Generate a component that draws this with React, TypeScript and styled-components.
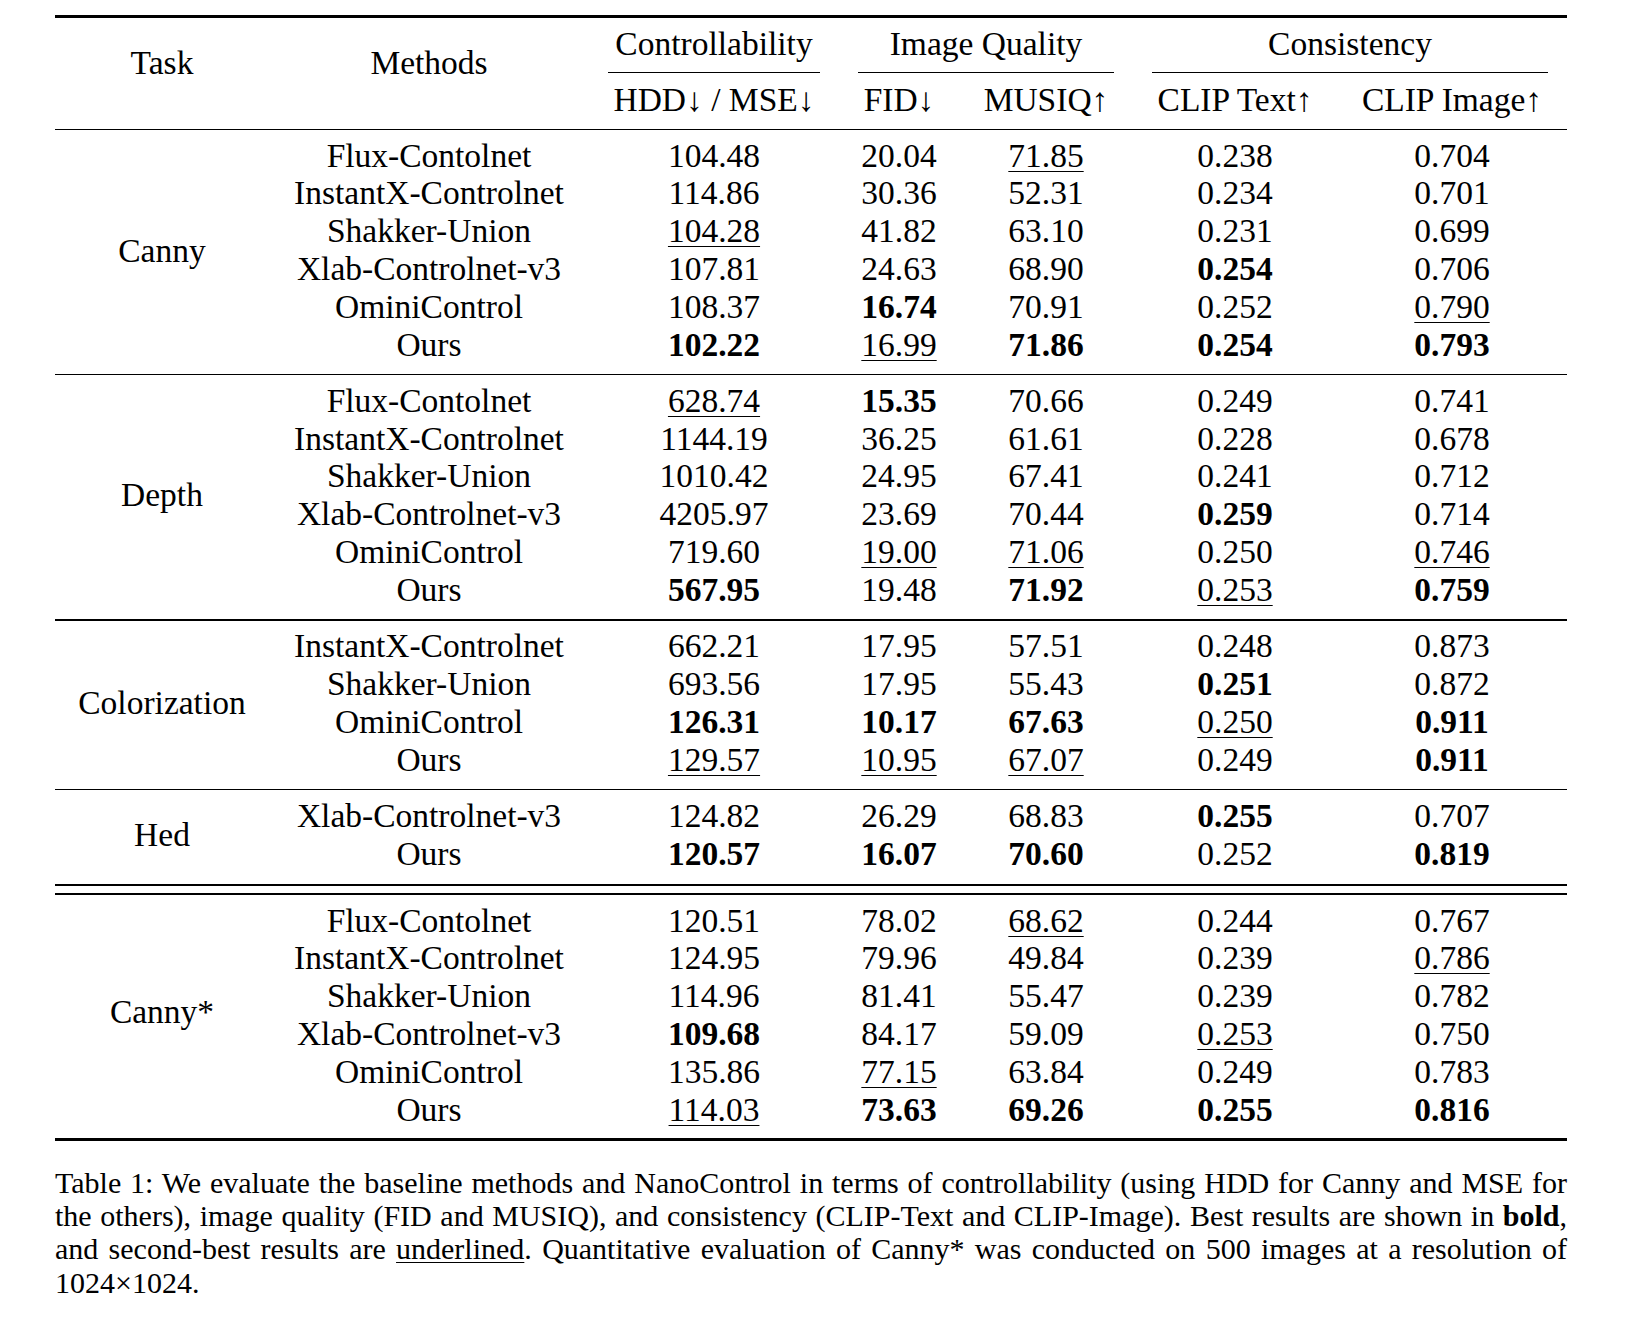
import React from "react";
import styled, { createGlobalStyle } from "styled-components";

const GlobalStyle = createGlobalStyle`
  html, body { margin: 0; padding: 0; background: #ffffff; }
  body {
    font-family: "Liberation Serif", "Times New Roman", serif;
    color: #000;
  }
`;

const COLS = "214px 320px 250px 120px 174px 204px 230px";

const Page = styled.div`
  width: 1512px;
  padding: 15px 0 40px 55px;
`;

const Table = styled.div`
  font-size: 33.5px;
  line-height: 37.8px;
`;

const Rule = styled.div<{ $weight: number }>`
  height: ${(p) => p.$weight}px;
  background: #000;
`;

const DoubleRule = styled.div`
  display: flex;
  flex-direction: column;
  gap: 7px;
`;

const HeaderGrid = styled.div`
  display: grid;
  grid-template-columns: ${COLS};
  grid-template-rows: 37.8px 17.2px 37.8px;
  padding: 8.3px 0 10px;
`;

const StubHead = styled.div<{ $col: number }>`
  grid-column: ${(p) => p.$col};
  grid-row: 1 / 4;
  text-align: center;
  padding-top: 18px;
`;

const GroupHead = styled.div<{ $cols: string }>`
  grid-column: ${(p) => p.$cols};
  grid-row: 1;
  align-self: start;
  line-height: 35.8px;
  text-align: center;
  white-space: nowrap;
`;

const CmidRule = styled.div<{ $cols: string }>`
  grid-column: ${(p) => p.$cols};
  grid-row: 2;
  align-self: start;
  margin: 8.6px 19px 0;
  height: 1.1px;
  background: #000;
`;

const SubHead = styled.div<{ $col: number }>`
  grid-column: ${(p) => p.$col};
  grid-row: 3;
  text-align: center;
  white-space: nowrap;
`;

const Group = styled.div<{ $pt: number; $pb: number }>`
  display: grid;
  grid-template-columns: ${COLS};
  grid-auto-rows: 37.8px;
  align-items: start;
  padding: ${(p) => p.$pt}px 0 ${(p) => p.$pb}px;
`;

const TaskCell = styled.div<{ $rows: number; $lift: number }>`
  grid-column: 1;
  grid-row: 1 / span ${(p) => p.$rows};
  align-self: stretch;
  display: flex;
  align-items: center;
  justify-content: center;
  padding-bottom: ${(p) => p.$lift}px;
`;

const Cell = styled.div`
  line-height: 34px;
  text-align: center;
  white-space: nowrap;
`;

const Value = styled.span<{ $bold?: boolean; $under?: boolean }>`
  font-weight: ${(p) => (p.$bold ? 700 : 400)};
  text-decoration: ${(p) => (p.$under ? "underline" : "none")};
  text-underline-offset: 4px;
  text-decoration-thickness: 1.4px;
`;

const Caption = styled.div`
  margin-top: 25px;
  font-size: 30px;
  line-height: 33.3px;
`;

const CaptionLine = styled.div<{ $last?: boolean }>`
  text-align: justify;
  text-align-last: ${(p) => (p.$last ? "left" : "justify")};
`;

const Under = styled.span`
  text-decoration: underline;
  text-underline-offset: 3px;
  text-decoration-thickness: 1.3px;
`;

type Row = [string, string, string, string, string, string];
type TaskGroup = { task: string; rows: Row[]; pt: number; pb: number; lift: number };

const groups: TaskGroup[] = [
  {
    task: "Canny",
    pt: 8.5,
    pb: 8.5,
    lift: 3,
    rows: [
      ["Flux-Contolnet", "104.48", "20.04", "u71.85", "0.238", "0.704"],
      ["InstantX-Controlnet", "114.86", "30.36", "52.31", "0.234", "0.701"],
      ["Shakker-Union", "u104.28", "41.82", "63.10", "0.231", "0.699"],
      ["Xlab-Controlnet-v3", "107.81", "24.63", "68.90", "b0.254", "0.706"],
      ["OminiControl", "108.37", "b16.74", "70.91", "0.252", "u0.790"],
      ["Ours", "b102.22", "u16.99", "b71.86", "b0.254", "b0.793"],
    ],
  },
  {
    task: "Depth",
    pt: 8.5,
    pb: 8.5,
    lift: 4,
    rows: [
      ["Flux-Contolnet", "u628.74", "b15.35", "70.66", "0.249", "0.741"],
      ["InstantX-Controlnet", "1144.19", "36.25", "61.61", "0.228", "0.678"],
      ["Shakker-Union", "1010.42", "24.95", "67.41", "0.241", "0.712"],
      ["Xlab-Controlnet-v3", "4205.97", "23.69", "70.44", "b0.259", "0.714"],
      ["OminiControl", "719.60", "u19.00", "u71.06", "0.250", "u0.746"],
      ["Ours", "b567.95", "19.48", "b71.92", "u0.253", "b0.759"],
    ],
  },
  {
    task: "Colorization",
    pt: 8.5,
    pb: 8.5,
    lift: 4,
    rows: [
      ["InstantX-Controlnet", "662.21", "17.95", "57.51", "0.248", "0.873"],
      ["Shakker-Union", "693.56", "17.95", "55.43", "b0.251", "0.872"],
      ["OminiControl", "b126.31", "b10.17", "b67.63", "u0.250", "b0.911"],
      ["Ours", "u129.57", "u10.95", "u67.07", "0.249", "b0.911"],
    ],
  },
  {
    task: "Hed",
    pt: 9,
    pb: 9.5,
    lift: 4,
    rows: [
      ["Xlab-Controlnet-v3", "124.82", "26.29", "68.83", "b0.255", "0.707"],
      ["Ours", "b120.57", "b16.07", "b70.60", "0.252", "b0.819"],
    ],
  },
  {
    task: "Canny*",
    pt: 9,
    pb: 8,
    lift: 10,
    rows: [
      ["Flux-Contolnet", "120.51", "78.02", "u68.62", "0.244", "0.767"],
      ["InstantX-Controlnet", "124.95", "79.96", "49.84", "0.239", "u0.786"],
      ["Shakker-Union", "114.96", "81.41", "55.47", "0.239", "0.782"],
      ["Xlab-Controlnet-v3", "b109.68", "84.17", "59.09", "u0.253", "0.750"],
      ["OminiControl", "135.86", "u77.15", "63.84", "0.249", "0.783"],
      ["Ours", "u114.03", "b73.63", "b69.26", "b0.255", "b0.816"],
    ],
  },
];

const renderValue = (raw: string) => {
  const mark = raw[0];
  const bold = mark === "b";
  const under = mark === "u";
  const text = bold || under ? raw.slice(1) : raw;
  return (
    <Value $bold={bold} $under={under}>
      {text}
    </Value>
  );
};

const TaskBlock: React.FC<{ g: TaskGroup }> = ({ g }) => (
  <Group $pt={g.pt} $pb={g.pb}>
    <TaskCell $rows={g.rows.length} $lift={g.lift}>
      {g.task}
    </TaskCell>
    {g.rows.map((r, i) => (
      <React.Fragment key={i}>
        <Cell>{r[0]}</Cell>
        {r.slice(1).map((v, j) => (
          <Cell key={j}>{renderValue(v)}</Cell>
        ))}
      </React.Fragment>
    ))}
  </Group>
);

export default function App() {
  return (
    <>
      <GlobalStyle />
      <Page>
        <Table>
          <Rule $weight={2.5} />
          <HeaderGrid>
            <StubHead $col={1}>Task</StubHead>
            <StubHead $col={2}>Methods</StubHead>
            <GroupHead $cols="3">Controllability</GroupHead>
            <GroupHead $cols="4 / 6">Image Quality</GroupHead>
            <GroupHead $cols="6 / 8">Consistency</GroupHead>
            <CmidRule $cols="3" />
            <CmidRule $cols="4 / 6" />
            <CmidRule $cols="6 / 8" />
            <SubHead $col={3}>HDD↓ / MSE↓</SubHead>
            <SubHead $col={4}>FID↓</SubHead>
            <SubHead $col={5}>MUSIQ↑</SubHead>
            <SubHead $col={6}>CLIP Text↑</SubHead>
            <SubHead $col={7}>CLIP Image↑</SubHead>
          </HeaderGrid>
          <Rule $weight={1.5} />
          <TaskBlock g={groups[0]} />
          <Rule $weight={1.5} />
          <TaskBlock g={groups[1]} />
          <Rule $weight={1.5} />
          <TaskBlock g={groups[2]} />
          <Rule $weight={1.5} />
          <TaskBlock g={groups[3]} />
          <DoubleRule>
            <Rule $weight={1.6} />
            <Rule $weight={1.6} />
          </DoubleRule>
          <TaskBlock g={groups[4]} />
          <Rule $weight={2.5} />
        </Table>
        <Caption>
          <CaptionLine>
            Table 1: We evaluate the baseline methods and NanoControl in terms of controllability (using HDD for Canny and MSE for
          </CaptionLine>
          <CaptionLine>
            the others), image quality (FID and MUSIQ), and consistency (CLIP-Text and CLIP-Image). Best results are shown in <b>bold</b>,
          </CaptionLine>
          <CaptionLine>
            and second-best results are <Under>underlined</Under>. Quantitative evaluation of Canny* was conducted on 500 images at a resolution of
          </CaptionLine>
          <CaptionLine $last>1024×1024.</CaptionLine>
        </Caption>
      </Page>
    </>
  );
}
